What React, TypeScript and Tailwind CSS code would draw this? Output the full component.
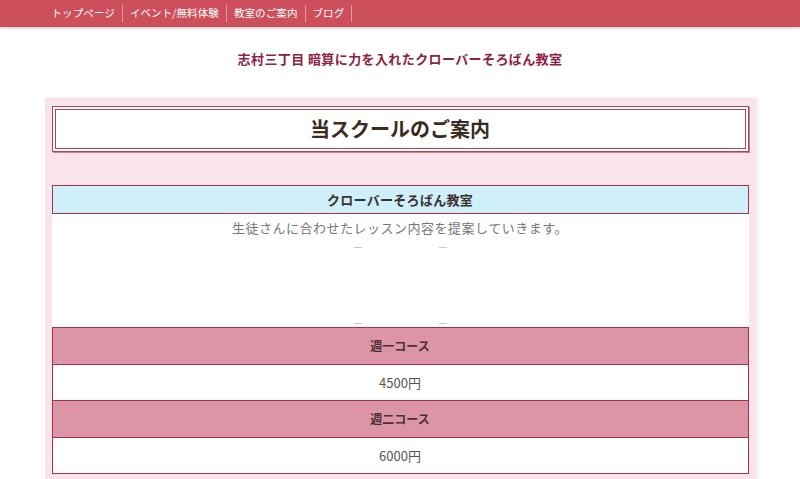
import React from 'react';

const navItems = ['トップページ', 'イベント/無料体験', '教室のご案内', 'ブログ'];

const courses = [
  { name: '週一コース', price: '4500円' },
  { name: '週二コース', price: '6000円' },
];

export default function App() {
  return (
    <div
      className="min-h-[479px] bg-white"
      style={{ fontFamily: '"Noto Sans CJK JP", "Noto Sans", sans-serif' }}
    >
      {/* top nav */}
      <nav className="h-[27px] bg-[#cc4f5b] shadow-[0_1px_3px_rgba(0,0,0,0.25)]">
        <ul className="mx-auto flex h-full max-w-[711px] items-center">
          {navItems.map((item) => (
            <li
              key={item}
              className="flex h-[17px] items-center border-r border-[#e59aa2] px-[7px] text-[10.5px] leading-none tracking-[0.1px] text-white"
            >
              {item}
            </li>
          ))}
        </ul>
      </nav>

      <p className="pt-[22px] text-center text-[13px] font-bold leading-[20px] tracking-[0.4px] text-[#8c2342]">
        志村三丁目 暗算に力を入れたクローバーそろばん教室
      </p>

      {/* main panel */}
      <main className="mx-auto mt-[29px] w-[711px] bg-[#f9e4eb] px-[7px] pb-[10px] pt-[8px] shadow-[2px_0_4px_rgba(0,0,0,0.08)]">
        <div className="flex h-[46px] items-center justify-center border-4 border-double border-[#a8445a] bg-white shadow-[1px_1px_0_#c98090]">
          <h1 className="text-[20px] font-bold leading-none text-[#3b2b1e]">当スクールのご案内</h1>
        </div>

        <section className="mt-[33px]">
          <h2 className="flex h-[29px] items-center justify-center border border-[#a8304c] bg-[#cff0fa] text-[13px] font-bold tracking-[0.3px] text-[#3a3030]">
            クローバーそろばん教室
          </h2>
          <div className="h-[113px] bg-white pt-[4px]">
            <p className="text-center text-[13px] leading-[20px] tracking-[0.5px] text-[#777]">
              生徒さんに合わせたレッスン内容を提案していきます。
            </p>
            <div className="mx-auto mt-[9px] flex h-[77px] w-[93px] flex-col justify-between">
              <div className="flex justify-between">
                <span className="h-px w-[8px] bg-[#c8c8c8]" />
                <span className="h-px w-[8px] bg-[#c8c8c8]" />
              </div>
              <div className="flex justify-between">
                <span className="h-px w-[8px] bg-[#c8c8c8]" />
                <span className="h-px w-[8px] bg-[#c8c8c8]" />
              </div>
            </div>
          </div>
        </section>

        <table className="w-full border-collapse">
          <tbody>
            {courses.map((c) => (
              <React.Fragment key={c.name}>
                <tr>
                  <th className="h-[37px] border border-[#a8304c] bg-[#dc95a6] text-center text-[12px] font-bold text-[#4a3030]">
                    {c.name}
                  </th>
                </tr>
                <tr>
                  <td className="h-[36px] border border-[#a8304c] bg-white text-center text-[13px] text-[#555]">
                    {c.price}
                  </td>
                </tr>
              </React.Fragment>
            ))}
          </tbody>
        </table>
      </main>
    </div>
  );
}
